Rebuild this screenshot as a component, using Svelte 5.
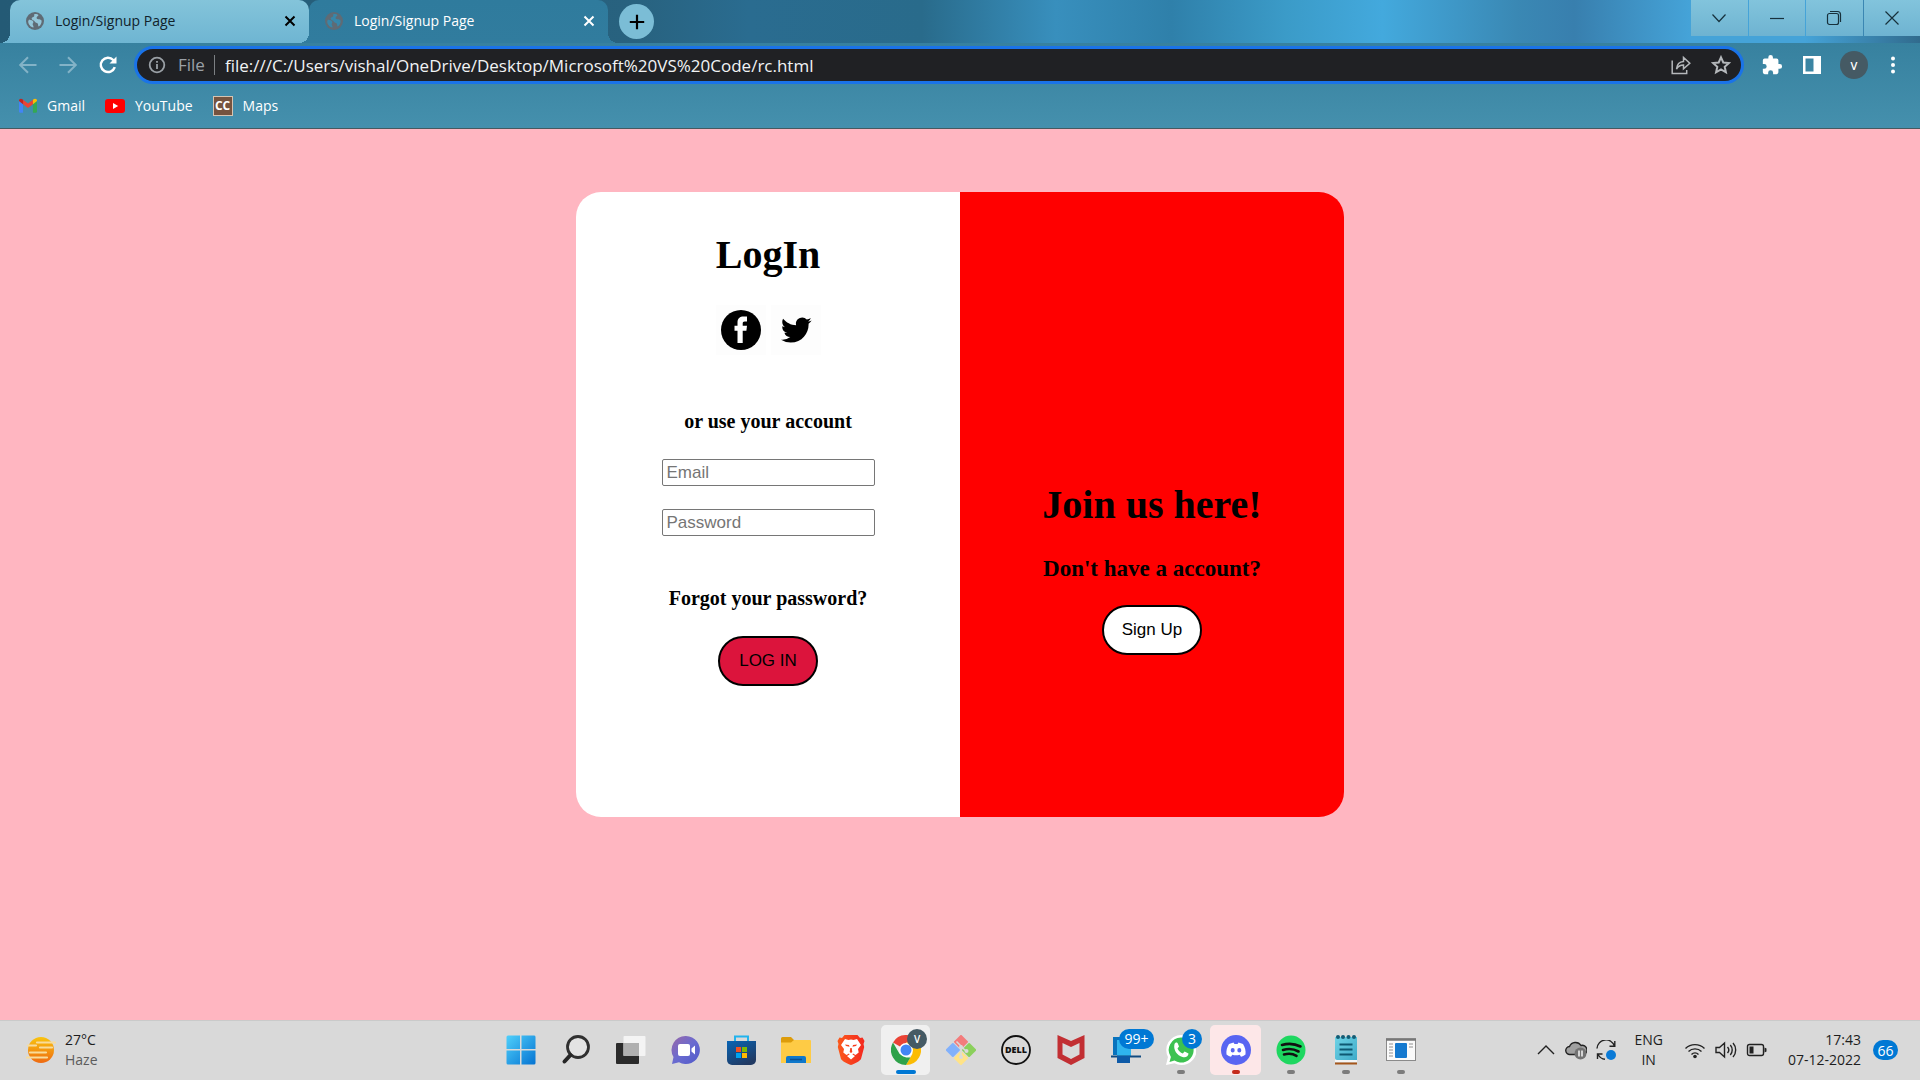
<script>
  const tabs = [
    { title: 'Login/Signup Page', active: false },
    { title: 'Login/Signup Page', active: true }
  ];
  let url = $state('file:///C:/Users/vishal/OneDrive/Desktop/Microsoft%20VS%20Code/rc.html');
  let email = $state('');
  let password = $state('');
</script>

<div class="screen">
  <header class="browser">
    <div class="strip">
      <div class="tabs">
        {#each tabs as tab}
          <div class="tab" class:active={tab.active}>
            <svg class="globe" viewBox="0 0 18 18" width="18" height="18" aria-hidden="true">
              <circle cx="9" cy="9" r="9" fill="#5f6b75" />
              <path class="land" d="M3 7.500c2 .6 3.800.8 4.300 2.200.4 1.200-1 1.600-.6 2.800.3 1 .9 1.700.8 2.900C4.500 15 2.200 12.300 2.200 9.200zM8.200 2.300c1.600-.5 3.400 0 4.300.8-.3 1.400-1.500 1.200-1.800 2.200-.4 1.200.5 1.900 1.700 2 1.300.1 2.300.4 3.200 1.200.3 2.600-1 4.800-2.900 6-.8-.6-.3-2-1-3-.7-.9-2.500-.7-3-2C8.200 8.100 6 8.300 5.700 6.700c-.3-1.600 2.300-1.500 2.500-2.700z" />
            </svg>
            <button class="title">{tab.title}</button>
            <button class="close" aria-label="Close tab">
              <svg viewBox="0 0 12 12" width="12" height="12"><path d="M1.500 1.500l9 9M10.500 1.500l-9 9" stroke="currentColor" stroke-width="2" fill="none" /></svg>
            </button>
          </div>
        {/each}
      </div>
      <button class="newtab" aria-label="New tab">
        <svg viewBox="0 0 16 16" width="16" height="16"><path d="M8 .8v14.400M.8 8h14.400" stroke="#000" stroke-width="2.200" /></svg>
      </button>
      <div class="caption">
        <button aria-label="Search tabs"><svg viewBox="0 0 16 16" width="16" height="16"><path d="M1.500 4.500L8 11.500l6.500-7" /></svg></button>
        <button aria-label="Minimize"><svg viewBox="0 0 16 16" width="16" height="16"><path d="M1 8.500h14" /></svg></button>
        <button aria-label="Restore"><svg viewBox="0 0 16 16" width="16" height="16"><rect x="1.500" y="3.500" width="11" height="11" rx="2" /><path d="M4 1.500h7.500a3 3 0 013 3V12" /></svg></button>
        <button aria-label="Close"><svg viewBox="0 0 16 16" width="16" height="16"><path d="M1.500 1.500l13 13M14.500 1.500l-13 13" /></svg></button>
      </div>
    </div>

    <div class="toolbar">
      <button class="icon faded" aria-label="Back"><svg viewBox="0 0 20 20" width="20" height="20"><path d="M18.500 10H2.500M10 2.200L2.200 10l7.800 7.800" /></svg></button>
      <button class="icon faded" aria-label="Forward"><svg viewBox="0 0 20 20" width="20" height="20"><path d="M1.500 10h16M10 2.200l7.800 7.800-7.800 7.800" /></svg></button>
      <button class="icon reload" aria-label="Reload"><svg viewBox="0 0 20 20" width="20" height="20"><path d="M16.800 12.200A7.200 7.200 0 1115.300 5L17 6.800" /><path class="solid" d="M18.500 1.500v7h-7z" /></svg></button>
      <div class="omnibox">
        <svg class="info" viewBox="0 0 18 18" width="18" height="18" aria-hidden="true"><circle cx="9" cy="9" r="7.300" /><path d="M9 8v5M9 5v1.800" /></svg>
        <span class="scheme">File</span>
        <input class="url" aria-label="Address" bind:value={url} spellcheck="false" />
        <button class="grey" aria-label="Share"><svg viewBox="0 0 20 20" width="20" height="20"><path d="M1.200 5.500v13h14.500V15M5.500 14C6 9 8.500 6.700 12.500 6.500V2.500L18.800 8.300l-6.300 5.500V10C9.500 10 7.300 11 5.500 14z" /></svg></button>
        <button class="grey" aria-label="Bookmark this page"><svg viewBox="0 0 20 20" width="20" height="20"><path class="star" d="M10 2.300l2.300 5.200 5.600.5-4.200 3.800 1.200 5.500L10 14.400l-4.900 2.900 1.200-5.500L2.100 8l5.600-.5z" /></svg></button>
      </div>
      <button class="icon white" aria-label="Extensions"><svg viewBox="0 0 24 24" width="22" height="22"><path class="solid" d="M20.500 11H19V7a2 2 0 00-2-2h-4V3.500a2.500 2.500 0 00-5 0V5H4a2 2 0 00-2 2v3.800h1.500a2.700 2.700 0 010 5.400H2V20a2 2 0 002 2h3.800v-1.500a2.700 2.700 0 015.400 0V22H17a2 2 0 002-2v-4h1.500a2.500 2.500 0 000-5z" /></svg></button>
      <button class="icon white" aria-label="Side panel"><svg viewBox="0 0 20 20" width="20" height="20"><path class="solid" fill-rule="evenodd" d="M1 1h18v18H1zM3.500 3.500v13h8v-13z" /></svg></button>
      <button class="profile">V</button>
      <button class="icon white dots" aria-label="Menu"><svg viewBox="0 0 6 20" width="6" height="20"><g class="solid"><circle cx="3" cy="3.500" r="2" /><circle cx="3" cy="10" r="2" /><circle cx="3" cy="16.500" r="2" /></g></svg></button>
    </div>

    <nav class="bookmarks" aria-label="Bookmarks">
      <a href="#gmail">
        <svg viewBox="0 0 20 16" width="18" height="15"><path fill="#4285f4" d="M0 3l4.500 3.400V16H1.400A1.400 1.400 0 010 14.600z" /><path fill="#34a853" d="M20 3l-4.500 3.400V16h3.100a1.400 1.400 0 001.400-1.400z" /><path fill="#ea4335" d="M4.500 1.500L10 5.700l5.500-4.200v5L10 10.700 4.500 6.500z" /><path fill="#c5221f" d="M0 2.500C0 .4 2.400-.5 4.500 1.500v5L0 3.100z" /><path fill="#fbbc04" d="M20 2.500c0-2.100-2.400-3-4.500-1v5L20 3.100z" /></svg>
        <span>Gmail</span>
      </a>
      <a href="#youtube">
        <svg viewBox="0 0 20 14" width="20" height="14"><rect width="20" height="14" rx="3" fill="#f00" /><path d="M8 4l5.200 3L8 10z" fill="#fff" /></svg>
        <span>YouTube</span>
      </a>
      <a href="#maps">
        <b class="cc">CC</b>
        <span>Maps</span>
      </a>
    </nav>
  </header>

  <main class="page">
    <div class="card">
      <form class="login" onsubmit={(e) => e.preventDefault()}>
        <h1>LogIn</h1>
        <div class="social">
          <a href="#facebook" aria-label="Facebook">
            <svg viewBox="0 0 50 50" width="50" height="50"><circle cx="25" cy="25" r="20" fill="#000" /><path d="M21.500 38V25.800h-3v-5h3v-3.300c0-4.200 2.500-6 6-6h3.500v5h-2.300c-1.500 0-2 .7-2 2v2.300h4.300l-.6 5h-3.700V38z" fill="#fff" /></svg>
          </a>
          <a href="#twitter" aria-label="Twitter">
            <svg viewBox="0 0 50 50" width="50" height="50"><path transform="translate(10 9.700) scale(1.280)" d="M23.950 4.570a10 10 0 01-2.820.77 4.960 4.960 0 002.160-2.720c-.95.550-2 .950-3.130 1.180a4.920 4.920 0 00-8.380 4.480C7.690 8.100 4.070 6.130 1.640 3.160a4.820 4.820 0 00-.67 2.480c0 1.710.87 3.210 2.190 4.100a4.900 4.900 0 01-2.230-.620v.060a4.920 4.920 0 003.950 4.830 5 5 0 01-2.210.080 4.940 4.940 0 004.600 3.420A9.870 9.870 0 010 19.540a14 14 0 007.550 2.210c9.050 0 14-7.500 14-13.980 0-.210 0-.420-.020-.630a9.940 9.940 0 002.420-2.570z" /></svg>
          </a>
        </div>
        <h4 class="or">or use your account</h4>
        <input type="email" placeholder="Email" aria-label="Email" bind:value={email} />
        <input type="password" placeholder="Password" aria-label="Password" bind:value={password} />
        <h4 class="forgot">Forgot your password?</h4>
        <button class="pill crimson">LOG IN</button>
      </form>
      <section class="join">
        <h1>Join us here!</h1>
        <h3>Don't have a account?</h3>
        <button class="pill">Sign Up</button>
      </section>
    </div>
  </main>

  <footer class="taskbar">
    <button class="weather">
      <svg viewBox="0 0 30 30" width="30" height="30" aria-hidden="true">
        <defs><linearGradient id="sun" x2="0" y2="1"><stop offset="0" stop-color="#f9c40f" /><stop offset="1" stop-color="#ee6a12" /></linearGradient></defs>
        <circle cx="15" cy="15" r="13" fill="url(#sun)" />
        <path d="M11 7.500h18M2 10.500h8M14 12.500h12M4 17.500h16M1 22.500h20" stroke="#f8dc9b" stroke-width="2.200" stroke-linecap="round" />
      </svg>
      <span class="lines"><span>27°C</span><span class="soft">Haze</span></span>
    </button>

    <div class="apps">
      <button aria-label="Start"><svg viewBox="0 0 30 30" width="30" height="30"><defs><linearGradient id="win" x2="1" y2="1"><stop offset="0" stop-color="#4fd0fb" /><stop offset="1" stop-color="#0573d2" /></linearGradient></defs><path fill="url(#win)" d="M2 .5h12V14H.5V2A1.500 1.500 0 012 .5zM15.500.5H28A1.500 1.500 0 0129.500 2v12h-14zM.5 15.500H14v14H2A1.500 1.500 0 01.5 28zM15.500 15.500h14V28a1.500 1.500 0 01-1.500 1.500H15.500z" /></svg></button>
      <button aria-label="Search"><svg viewBox="0 0 30 30" width="30" height="30"><circle cx="17" cy="12" r="10.500" fill="#e3e3e3" stroke="#303030" stroke-width="2.800" /><path d="M9.500 20L3.500 26.500" stroke="#262626" stroke-width="4" stroke-linecap="round" /></svg></button>
      <button aria-label="Task view"><svg viewBox="0 0 30 30" width="30" height="30"><rect y="8" width="23" height="21" rx="1" fill="#2b2b2b" /><rect x="7.500" y="1" width="22" height="20" rx="1" fill="#f4f4f4" /><path d="M7.500 8H23v13H7.500z" fill="#b0b0b0" /></svg></button>
      <button aria-label="Chat"><svg viewBox="0 0 30 30" width="30" height="30"><defs><linearGradient id="chat" x2="1" y2="1"><stop offset="0" stop-color="#9a68a8" /><stop offset=".5" stop-color="#6a6bd0" /><stop offset="1" stop-color="#5059c9" /></linearGradient></defs><path fill="url(#chat)" d="M15 1a14 14 0 11-7 26.200L1 29l1.500-7A14 14 0 0115 1z" /><rect x="7" y="9" width="12" height="12" rx="2" fill="#fff" /><path d="M20.500 13.500L24 10.500v9l-3.500-3z" fill="#fff" /></svg></button>
      <button aria-label="Microsoft Store"><svg viewBox="0 0 30 30" width="30" height="30"><defs><linearGradient id="store" x2=".6" y2="1"><stop offset="0" stop-color="#0864b4" /><stop offset="1" stop-color="#213a63" /></linearGradient></defs><path d="M9 7V1.500h13V7" fill="none" stroke="#22b4ee" stroke-width="2" /><path fill="url(#store)" d="M1 6h29v19a5 5 0 01-5 5H6a5 5 0 01-5-5z" /><path fill="#f25022" d="M10 12h5v5h-5z" /><path fill="#7fba00" d="M16 12h5v5h-5z" /><path fill="#00a4ef" d="M10 18h5v5h-5z" /><path fill="#ffb900" d="M16 18h5v5h-5z" /></svg></button>
      <button aria-label="File Explorer"><svg viewBox="0 0 30 30" width="30" height="30"><path fill="#dd9c0b" d="M1.500 2H10l3 3v4H0V3.500A1.500 1.500 0 011.500 2z" /><path fill="#fecb45" d="M0 7.500h10L13 5h16a1 1 0 011 1v22H0z" /><path fill="#0f78cb" d="M7 21h16a2 2 0 012 2v5H5v-5a2 2 0 012-2z" /><path d="M9 24.500h12" stroke="#0a4f91" stroke-width="1.500" /></svg></button>
      <button aria-label="Brave"><svg viewBox="0 0 30 30" width="30" height="30"><defs><linearGradient id="brave" x2="1"><stop offset="0" stop-color="#fb5a1c" /><stop offset="1" stop-color="#f4281f" /></linearGradient></defs><path fill="url(#brave)" d="M8.500 0h13l2.500 3 2.500-.5L28.500 6l-1 3 .7 3-3.200 12c-1 2-6 4.500-10 6-4-1.500-9-4-10-6L1.800 12l.7-3-1-3 2-3.500L6 3z" /><path fill="#fff" fill-rule="evenodd" d="M9 4l3.500 1L15 4.500l2.500.5L21 4l4 6-3 4 .7 3.500-3.200 2.500-2.500-1.500-.5 1 2.500 1.500-4 3.500-4-3.500 2.500-1.500-.5-1-2.500 1.500-3.200-2.500L8 14l-3-4zM9 9.500l1 1.500 3.500.8-.5-1.800zM21 9.500l-4 .5-.5 1.800 3.500-.8zM14.300 13l-.6 4 1.300 1 1.300-1-.6-4z" /></svg></button>
      <button class="current" aria-label="Google Chrome"><svg viewBox="0 0 30 30" width="30" height="30"><path fill="#ea4335" d="M15 15L2 7.500a15 15 0 0126 0H15z" /><path fill="#fbbc04" d="M15 7.500h13A15 15 0 0115 30l6.500-11.200z" /><path fill="#2ea24a" d="M2 7.500L8.500 18.800 15 22.500h4.400L15 30A15 15 0 012 7.500z" /><circle cx="15" cy="15" r="7" fill="#fff" /><circle cx="15" cy="15" r="5.500" fill="#4285f4" /></svg><span class="who">V</span><i class="mark wide"></i></button>
      <button aria-label="Git"><svg viewBox="0 0 30 30" width="30" height="30"><g transform="rotate(45 15 15)"><rect x="4" y="4" width="10.500" height="10.500" rx="1" fill="#f37c7c" /><rect x="15.500" y="4" width="10.500" height="10.500" rx="1" fill="#8bd05c" /><rect x="4" y="15.500" width="10.500" height="10.500" rx="1" fill="#82b1fb" /><rect x="15.500" y="15.500" width="10.500" height="10.500" rx="1" fill="#ffe387" /></g><path d="M10.500 6.500L15 11v12M15 11.500l5 4.500" stroke="#dadada" stroke-width="1.600" fill="none" /><circle cx="15" cy="12" r="2" fill="#dadada" /><circle cx="15" cy="22" r="2" fill="#dadada" /><circle cx="20.500" cy="16" r="2" fill="#dadada" /></svg></button>
      <button aria-label="Dell"><svg viewBox="0 0 30 30" width="30" height="30"><circle cx="15" cy="15" r="14" fill="none" stroke="#111" stroke-width="1.800" /><text class="dell" x="15" y="18" text-anchor="middle">DELL</text></svg></button>
      <button aria-label="McAfee"><svg viewBox="0 0 30 30" width="30" height="30"><path fill="#c22f33" fill-rule="evenodd" d="M1.500 0L15 6l13.500-6v23L15 30 1.500 23zM6.500 8v11.500L15 24l8.500-4.500V8L15 12z" /></svg></button>
      <button aria-label="Remote desktop"><svg viewBox="0 0 30 30" width="30" height="30"><path fill="#0873bd" d="M2 2h13v18H2z" /><path fill="#2fb4ee" d="M6 5h14v17H6z" /><path d="M0 21.500h30" stroke="#104a80" stroke-width="2" /><path fill="#0e5aa7" d="M6 21h13v7H6z" /></svg><span class="badge big">99+</span></button>
      <button aria-label="WhatsApp"><svg viewBox="0 0 30 30" width="30" height="30"><path fill="#fff" d="M15 0a15 15 0 11-6.500 28.200L0 30l2-8A15 15 0 0115 0z" /><path fill="#3dc251" d="M15 2.500A12.500 12.500 0 118.500 25.600L3.500 27l1.400-5A12.500 12.500 0 0115 2.500z" /><path fill="#fff" d="M8.500 9c1.500-2.200 3-1.700 3.500 0l1 2.500-1.500 2c1.200 2.500 2.800 4 5.300 5l1.800-2 3.900 2c0 3-3 4.500-6 3.500-5.500-1.500-9.500-7-8-13z" /></svg><span class="badge">3</span><i class="mark"></i></button>
      <button class="alert" aria-label="Discord"><svg viewBox="0 0 30 30" width="30" height="30"><circle cx="15" cy="15" r="15" fill="#5865f2" /><path fill="#fff" fill-rule="evenodd" d="M8 9l4.500-1.500 1 1.500h3l1-1.500L22 9c2 3 3 7 2.500 10.500-1.500 1.200-3 2-4.500 2.300l-1.300-2c-2.500.7-5 .7-7.400 0l-1.300 2c-1.500-.3-3-1.100-4.500-2.300C5 16 6 12 8 9zM11.700 13a2 2.200 0 100 4.400 2 2.200 0 000-4.400zM18.300 13a2 2.200 0 100 4.400 2 2.200 0 000-4.400z" /></svg><i class="mark"></i></button>
      <button aria-label="Spotify"><svg viewBox="0 0 30 30" width="30" height="30"><circle cx="15" cy="15" r="14.500" fill="#1ed760" /><path d="M6 10c6-1.800 13-1.300 18.500 1.500M7 15c5-1.500 11-1 15.500 1.500M8 19.500c4.500-1.200 9-.8 12.500 1.300" fill="none" stroke="#111" stroke-width="2.600" stroke-linecap="round" /></svg><i class="mark"></i></button>
      <button aria-label="Notepad"><svg viewBox="0 0 30 30" width="30" height="30"><defs><linearGradient id="pad" x2="1" y2="1"><stop offset="0" stop-color="#6fd3e6" /><stop offset="1" stop-color="#3fabc9" /></linearGradient></defs><path fill="#f4f4f4" d="M4 24h22v3H4z" /><path fill="url(#pad)" d="M4 2h22v23H6a2 2 0 01-2-2z" /><path d="M8.500 9.500h13M8.500 14.500h13M8.500 19.500h13" stroke="#0e5873" stroke-width="2" /><path d="M4 28.500h22" stroke="#a4561b" stroke-width="2" /><g fill="#135c74"><circle cx="7" cy="2" r="2" /><circle cx="12" cy="2" r="2" /><circle cx="17.500" cy="2" r="2" /><circle cx="23" cy="2" r="2" /></g></svg><i class="mark"></i></button>
      <button aria-label="Document viewer"><svg viewBox="0 0 30 30" width="30" height="30"><rect x=".5" y="4" width="29" height="21.500" fill="#fafafa" stroke="#8a8a8a" /><path d="M0 4.500h30" stroke="#777" stroke-width="2.500" /><rect x="9" y="8" width="12" height="15" rx="1" fill="#1479cf" /><path d="M3 9h4M3 12h4M3 15h4M3 18h4M3 21h4M23 9h4M23 12h4" stroke="#909090" /></svg><i class="mark"></i></button>
    </div>

    <div class="tray">
      <button aria-label="Hidden icons"><svg viewBox="0 0 20 20" width="20" height="20"><path d="M2 14l8-8 8 8" /></svg></button>
      <button aria-label="OneDrive"><svg viewBox="0 0 22 20" width="22" height="20"><path fill="#a0a0a0" d="M5 14.500a4 4 0 01-.5-8A6.500 6.500 0 0116 5.500a4.600 4.600 0 012.500 9z" /><circle class="none" cx="15.500" cy="13.500" r="6" fill="#727272" /><path d="M14 10.500v6M17 10.500v6" class="light" /></svg></button>
      <button aria-label="Sync"><svg viewBox="0 0 20 20" width="20" height="20"><path d="M1 8.500A9 9 0 0118.500 6M18.800 1v5.300h-5.300M1.500 19v-5h5M2 14.500c1.500 2.600 4 4.500 7 4.800" /><circle class="none" cx="15" cy="15" r="5" fill="#0a7ad6" /></svg></button>
      <button class="lines lang"><span>ENG</span><span>IN</span></button>
      <button aria-label="Wi-Fi"><svg viewBox="0 0 22 20" width="22" height="20"><path d="M1.500 8.500a13.500 13.500 0 0119 0M4.500 11.500a9.300 9.300 0 0113 0M7.500 14.500a5 5 0 017 0" /><circle class="none" cx="11" cy="16.500" r="1.800" fill="#222" /></svg></button>
      <button aria-label="Volume"><svg viewBox="0 0 22 20" width="22" height="20"><path d="M1 7.500h3.500L9.500 3v14l-5-4.500H1zM12.500 7a4.500 4.500 0 010 6M15.300 5a7.500 7.500 0 010 10M18 3a10.500 10.500 0 010 14" /></svg></button>
      <button aria-label="Battery"><svg viewBox="0 0 22 20" width="22" height="20"><rect x="1.500" y="4.500" width="16" height="11" rx="2" /><path class="none" d="M3.500 6.500h4v7h-4zM18.500 7.500l2 1v3l-2 1z" fill="#222" /></svg></button>
      <button class="lines clock"><span>17:43</span><span>07-12-2022</span></button>
      <button class="count">66</button>
    </div>
  </footer>
</div>

<style>
  :global(body) { margin: 0; }
  * { box-sizing: border-box; }
  button, input { font: inherit; color: inherit; }
  button { display: flex; align-items: center; justify-content: center; padding: 0; border: 0; background: none; }
  svg { display: block; flex: none; }
  a { color: inherit; text-decoration: none; }

  .screen { display: flex; flex-direction: column; min-height: 100vh; font-family: "Open Sans", "Noto Sans", sans-serif; font-size: 14px; }

  .browser { color: #fff; background: linear-gradient(#2f7b9d 0, #37819f 43px, #4590ad 100%); border-bottom: 1px solid #47595f; }
  .strip {
    display: flex; align-items: flex-start; height: 43px; padding-left: 10px;
    background: linear-gradient(90deg, #245a75 0, #28627f 33%, #2a6c90 39%, #296b8b 48%, #388fbd 55%, #2f80aa 61%, #3b9bc8 67%, #43a9dd 72%, #3a88b4 79%, #387fae 82%, #45a3d8 88%, #45a3d8 94%, #316b8d 100%);
  }
  .tabs { display: flex; }
  .tab { position: relative; display: flex; align-items: center; width: 299px; height: 43px; padding: 0 12px 2px 16px; border-radius: 10px 10px 0 0; color: #10222b; background: linear-gradient(#84c4da, #6eb5d2); }
  .tab.active { color: #fff; background: linear-gradient(#2f7b9d, #317c9e); }
  .tab::before, .tab::after { content: ""; position: absolute; bottom: 0; width: 10px; height: 10px; }
  .tab::before { left: -10px; background: radial-gradient(circle at 0 0, transparent 10px, #6eb5d2 10px); }
  .tab.active::before { background: radial-gradient(circle at 0 0, transparent 10px, #317c9e 10px); }
  .tab.active::after { right: -10px; background: radial-gradient(circle at 100% 0, transparent 10px, #317c9e 10px); }
  .land { fill: #93c5d8; }
  .active .land { fill: #3787aa; }
  .title { flex: 1; justify-content: flex-start; margin-left: 11px; height: 40px; }
  .close { width: 14px; height: 24px; color: #000; }
  .active .close { color: #fff; }
  .newtab { width: 35px; height: 35px; margin: 4px 0 0 11px; border-radius: 50%; background: #7bbdd6; }
  .caption { display: flex; gap: 1px; width: 229px; margin-left: auto; }
  .caption button { flex: 1; height: 36px; background: linear-gradient(#82c4dc, #6eb3d1); }
  .caption svg { fill: none; stroke: #17313c; stroke-width: 1.200; }

  .toolbar { display: flex; align-items: center; height: 44px; padding: 0 16px; }
  .icon { width: 24px; height: 32px; margin-right: 16px; }
  .icon svg { fill: none; stroke: currentColor; stroke-width: 2; }
  .icon .solid { fill: currentColor; stroke: none; }
  .faded { color: #83b3c7; }
  .reload { margin-right: 14px; }
  .reload svg { stroke-width: 2.500; }
  .omnibox { display: flex; align-items: center; flex: 1; height: 38px; margin-right: 16px; padding: 0 10px 0 11px; border: 3px solid #1a73e8; border-radius: 19px; background: #202124; font-size: 17px; }
  .info { fill: none; stroke: #9aa0a6; stroke-width: 1.800; }
  .scheme { margin-left: 12px; padding-right: 9px; border-right: 1px solid #7c8083; color: #9aa0a6; line-height: 20px; }
  .url { flex: 1; min-width: 0; height: 28px; margin-left: 10px; padding: 0; border: 0; outline: 0; background: none; color: #f1f3f4; }
  .grey { margin-left: 20px; color: #b5b8bb; }
  .grey svg { fill: none; stroke: currentColor; stroke-width: 1.500; }
  .grey .star { stroke-width: 2; }
  .profile { width: 28px; height: 28px; margin-right: 19px; border-radius: 50%; background: #455a64; font-size: 11px; font-weight: 600; }
  .dots { width: 12px; margin-right: 5px; }

  .bookmarks { display: flex; align-items: center; gap: 20px; height: 41px; padding: 0 19px 4px; }
  .bookmarks a { display: flex; align-items: center; gap: 10px; }
  .cc { width: 20px; border: 1px solid #d6c4b2; background: #75533f; font-size: 12px; line-height: 18px; text-align: center; }

  .page { flex: 1; padding: 63px 0; background: #ffb6c1; color: #000; font-family: "Liberation Serif", "Times New Roman", serif; }
  .card { display: grid; grid-template-columns: 1fr 1fr; width: 40%; min-width: 560px; min-height: 625px; margin: 0 auto; border-radius: 25px; overflow: hidden; }
  .login, .join { display: flex; flex-direction: column; align-items: center; }
  .login { padding-top: 40px; background: #fff; }
  .join { padding-top: 290px; background: #f00; }
  h1, h3, h4 { margin: 0; font-weight: 700; }
  h1 { font-size: 40px; line-height: 46px; }
  h3 { margin: 27px 0 23px; font-size: 23px; line-height: 27px; }
  h4 { font-size: 20px; line-height: 23px; }
  .social { display: flex; gap: 5px; margin-top: 27px; }
  .social a { background: #fdfdfd; }
  .or { margin: 55px 0 26px; }
  .login input { width: 213px; height: 27px; margin-bottom: 23px; padding: 1px 4px; border: 1px solid #767676; border-radius: 2px; background: #fff; font-family: "Liberation Sans", Arial, sans-serif; font-size: 17px; }
  .login input::placeholder { color: #757575; opacity: 1; }
  .forgot { margin: 28px 0 26px; }
  .pill { width: 100px; height: 50px; border: 2px solid #000; border-radius: 25px; background: #fff; font-family: "Liberation Sans", Arial, sans-serif; font-size: 17px; }
  .crimson { background: #dc143c; }

  .taskbar { display: grid; grid-template-columns: 1fr auto 1fr; align-items: center; height: 60px; padding-bottom: 1px; border-top: 1px solid #cacaca; background: #d9d9d9; color: #1d1d1d; }
  .weather { justify-self: start; gap: 9px; padding-left: 26px; }
  .lines { display: flex; flex-direction: column; align-items: flex-start; line-height: 20px; }
  .soft { color: #5c5c5c; }
  .apps { display: flex; padding-left: 1px; }
  .apps button { position: relative; width: 51px; height: 50px; margin: 0 2px; border-radius: 5px; }
  .apps .current { width: 49px; margin: 0 3px; background: #f0f0f0; }
  .apps .alert { background: #fde7e8; }
  .dell { font-size: 9px; font-weight: 800; fill: #111; }
  .mark { position: absolute; left: 50%; bottom: 1px; width: 8px; height: 4px; margin-left: -4px; border-radius: 2px; background: #7c7c7c; }
  .wide { width: 20px; margin-left: -10px; background: #0078d4; }
  .alert .mark { background: #c42b1c; }
  .badge, .who { position: absolute; top: 4px; border-radius: 10px; background: #0078d4; color: #fff; line-height: 20px; }
  .badge { left: 27px; width: 20px; }
  .big { left: 19px; width: 35px; }
  .who { left: 26px; width: 20px; background: #455a64; font-size: 10px; font-weight: 600; }
  .tray { display: flex; align-items: center; justify-self: end; padding-right: 22px; }
  .tray svg { fill: none; stroke: #222; stroke-width: 1.400; }
  .tray .none { stroke: none; }
  .tray .light { stroke: #fff; }
  .tray button { margin-right: 9px; }
  .tray .lines { flex-direction: column; }
  .tray .lang { align-items: center; margin: 0 21px 0 9px; }
  .tray .clock { align-items: flex-end; margin: 0 12px 0 11px; }
  .tray .count { width: 25px; height: 20px; margin: 0; border-radius: 10px; background: #0078d4; color: #fff; }
</style>
